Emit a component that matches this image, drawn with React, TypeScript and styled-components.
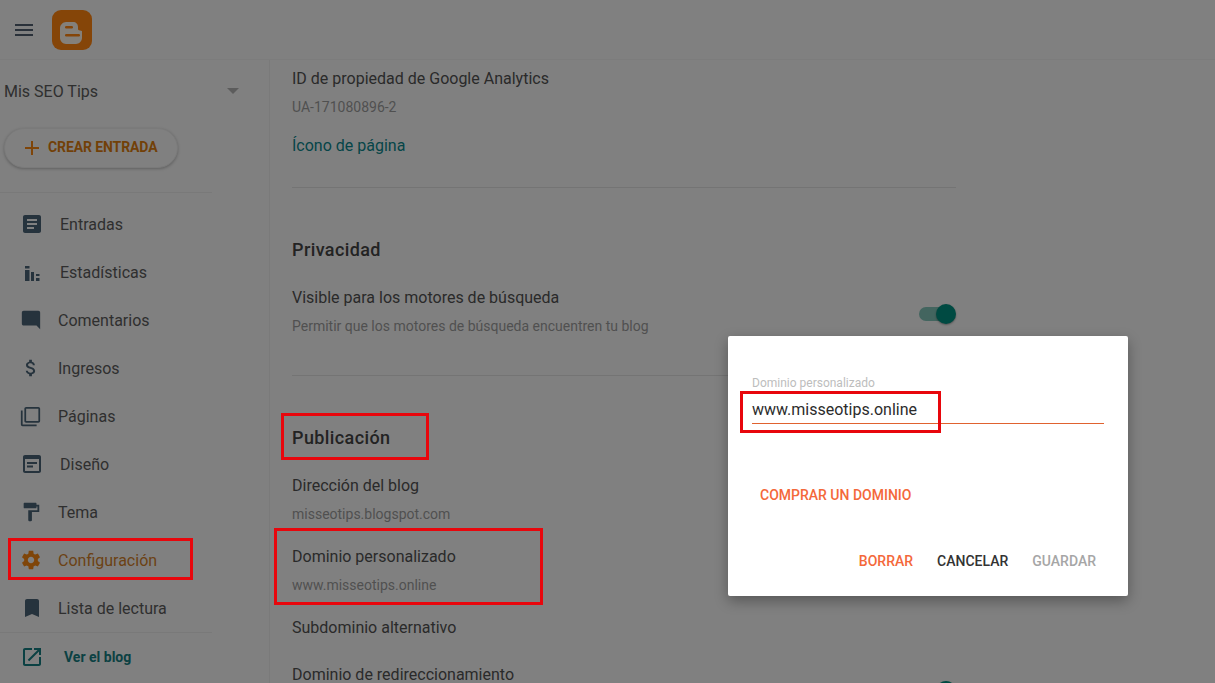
import styled, { createGlobalStyle } from 'styled-components'

const GlobalStyle = createGlobalStyle`
  html, body {
    margin: 0;
    height: 100%;
    overflow: hidden;
    background: #808080;
    font-family: Roboto, "Liberation Sans", sans-serif;
    color: #2b2b2b;
  }
`

const Page = styled.div`
  position: relative;
  width: 1215px;
  height: 683px;
  overflow: hidden;
  display: flex;
  flex-direction: column;
`

const Header = styled.header`
  display: flex;
  align-items: center;
  gap: 16px;
  height: 60px;
  flex-shrink: 0;
  padding-left: 12px;
  box-sizing: border-box;
  border-bottom: 1px solid #7c7c7c;
`

const Body = styled.div`
  display: flex;
  flex: 1;
  min-height: 0;
`

const Sidebar = styled.aside`
  width: 270px;
  flex-shrink: 0;
  box-sizing: border-box;
  border-right: 1px solid #7a7a7a;
`

const BlogPicker = styled.div`
  display: flex;
  align-items: center;
  justify-content: space-between;
  height: 62px;
  padding: 0 30px 0 4px;
  font-size: 16px;
  color: #2f2f2f;
`

const Caret = styled.span`
  width: 0;
  height: 0;
  border-left: 6px solid transparent;
  border-right: 6px solid transparent;
  border-top: 6px solid #5c5c5c;
`

const CreateButton = styled.div`
  display: flex;
  align-items: center;
  gap: 8px;
  width: 174px;
  height: 40px;
  margin: 6px 0 0 4px;
  padding-left: 19px;
  box-sizing: border-box;
  border-radius: 20px;
  background: #808080;
  border: 1px solid #7a7a7a;
  box-shadow: 0 1px 3px rgba(0, 0, 0, 0.25);
  font-size: 14px;
  font-weight: 700;
  letter-spacing: -0.1px;
  color: #724008;

  span {
    transform: translateY(-1px);
  }
`

const SideDivider = styled.div`
  width: 212px;
  height: 1px;
  background: #797979;
`

const TopDivider = styled(SideDivider)`
  margin: 24px 0 7px;
`

const Nav = styled.nav`
  display: flex;
  flex-direction: column;
`

const NavItem = styled.div<{ $active?: boolean; $textLeft: number }>`
  position: relative;
  display: flex;
  align-items: center;
  height: 48px;
  padding-left: 20px;
  font-size: 16px;
  color: ${(p) => (p.$active ? '#6c4214' : '#2f2f2f')};

  svg {
    fill: ${(p) => (p.$active ? '#7f4509' : '#26333d')};
  }

  span {
    margin-left: ${(p) => p.$textLeft - 44}px;
  }
`

const IconBox = styled.div`
  display: flex;
  align-items: center;
  width: 24px;
  height: 24px;
  flex-shrink: 0;
`

const ViewBlog = styled.div`
  display: flex;
  align-items: center;
  height: 48px;
  padding-left: 20px;
  gap: 20px;
  font-size: 14px;
  font-weight: 700;
  color: #0b4143;

  svg {
    fill: #0b4143;
  }
`

const Main = styled.main`
  flex: 1;
  padding: 9px 0 0 22px;
  overflow: hidden;
`

const Content = styled.div`
  width: 664px;
`

const Field = styled.div<{ $gap?: number }>`
  position: relative;
  display: flex;
  flex-direction: column;
  gap: 8px;
  margin-bottom: ${(p) => p.$gap ?? 23}px;
`

const FieldTitle = styled.div`
  font-size: 16px;
  line-height: 20px;
  color: #2a2a2a;
`

const FieldValue = styled.div`
  font-size: 14px;
  line-height: 20px;
  min-height: 20px;
  color: #505050;
`

const FieldLink = styled(FieldTitle)`
  color: #064548;
  margin-bottom: 31px;
`

const SectionDivider = styled.div`
  height: 1px;
  background: #747474;
`

const SectionTitle = styled.h2`
  position: relative;
  display: flex;
  align-items: center;
  height: 24px;
  margin: 49px 0 27px;
  font-size: 18px;
  font-weight: 500;
  letter-spacing: 0.4px;
  color: #232323;
`

const ToggleRow = styled.div`
  display: flex;
  justify-content: space-between;
  align-items: center;
  margin-bottom: 39px;
`

const Toggle = styled.div`
  position: relative;
  width: 34px;
  height: 14px;
  margin-right: 3px;
  border-radius: 7px;
  background: #43655f;
  transform: translateY(2px);

  &::after {
    content: '';
    position: absolute;
    right: -3px;
    top: -3px;
    width: 20px;
    height: 20px;
    border-radius: 50%;
    background: #004a42;
    box-shadow: 0 1px 2px rgba(0, 0, 0, 0.35);
  }
`

const Mark = styled.div<{ $top: number; $left: number; $width: number; $height: number }>`
  position: absolute;
  top: ${(p) => p.$top}px;
  left: ${(p) => p.$left}px;
  width: ${(p) => p.$width}px;
  height: ${(p) => p.$height}px;
  box-sizing: border-box;
  border: 3px solid #e8060c;
  pointer-events: none;
`

const Dialog = styled.div`
  position: absolute;
  left: 728px;
  top: 336px;
  width: 400px;
  height: 260px;
  box-sizing: border-box;
  padding: 41px 24px 0;
  background: #fff;
  border-radius: 2px;
  box-shadow: 0 5px 14px rgba(0, 0, 0, 0.32);
`

const InputLabel = styled.div`
  font-size: 12px;
  line-height: 12px;
  color: #bdbdbd;
`

const InputValue = styled.div`
  position: relative;
  height: 35px;
  box-sizing: border-box;
  padding-top: 11px;
  border-bottom: 1px solid #e0622f;
  font-size: 16px;
  line-height: 20px;
  color: #2c2c2c;
`

const BuyLink = styled.div`
  margin: 61px 0 0 8px;
  font-size: 14px;
  line-height: 20px;
  font-weight: 500;
  color: #f4683a;
`

const Actions = styled.div`
  display: flex;
  justify-content: flex-end;
  gap: 24px;
  margin: 46px 8px 0 0;
`

const Action = styled.div<{ $color: string }>`
  font-size: 14px;
  line-height: 20px;
  font-weight: 500;
  color: ${(p) => p.$color};
`

const MenuIcon = styled.svg`
  fill: #2a313a;
`

const Icon = ({ d, size = 24 }: { d: string; size?: number }) => (
  <svg width={size} height={size} viewBox="0 0 24 24">
    <path d={d} />
  </svg>
)

const ICONS = {
  posts: 'M19 3H5c-1.1 0-2 .9-2 2v14c0 1.1.9 2 2 2h14c1.1 0 2-.9 2-2V5c0-1.1-.9-2-2-2zm-5 14H7v-2h7v2zm3-4H7v-2h10v2zm0-4H7V7h10v2z',
  stats: 'M5 6h4.500v2.500H5zM5 10h4.500v11H5zM11 12h3v9h-3zM16 14h3.500v2H16zM16 18h3.500v3H16z',
  comments: 'M21.99 4c0-1.1-.89-2-1.99-2H4c-1.1 0-2 .9-2 2v12c0 1.1.9 2 2 2h14l4 4-.01-18z',
  money: 'M11.8 10.9c-2.27-.59-3-1.2-3-2.15 0-1.09 1.01-1.85 2.7-1.85 1.78 0 2.44.85 2.5 2.1h2.21c-.07-1.72-1.12-3.3-3.21-3.81V3h-3v2.16c-1.94.42-3.5 1.68-3.5 3.61 0 2.31 1.91 3.46 4.7 4.13 2.5.6 3 1.48 3 2.41 0 .69-.49 1.79-2.7 1.79-2.06 0-2.87-.92-2.98-2.1h-2.2c.12 2.19 1.76 3.42 3.68 3.83V21h3v-2.15c1.95-.37 3.5-1.5 3.5-3.55 0-2.84-2.43-3.81-4.7-4.4z',
  pages: 'M3 5H1v16c0 1.1.9 2 2 2h16v-2H3V5zm18-4H7c-1.1 0-2 .9-2 2v14c0 1.1.9 2 2 2h14c1.1 0 2-.9 2-2V3c0-1.1-.9-2-2-2zm0 16H7V3h14v14z',
  layout: 'M19 3H5c-1.1 0-2 .9-2 2v14c0 1.1.9 2 2 2h14c1.1 0 2-.9 2-2V5c0-1.1-.9-2-2-2zm0 16H5V7h14v12zM7 10h10v2H7zm0 3.500h6v2H7z',
  theme: 'M18 4V3c0-.55-.45-1-1-1H5c-.55 0-1 .45-1 1v4c0 .55.45 1 1 1h12c.55 0 1-.45 1-1V6h1v4H9v11c0 .55.45 1 1 1h2c.55 0 1-.45 1-1v-9h8V4h-3z',
  settings: 'M19.43 12.98c.04-.32.07-.64.07-.98s-.03-.66-.07-.98l2.11-1.65c.19-.15.24-.42.12-.64l-2-3.46c-.12-.22-.39-.3-.61-.22l-2.49 1c-.52-.4-1.08-.73-1.69-.98l-.38-2.65C14.46 2.18 14.25 2 14 2h-4c-.25 0-.46.18-.49.42l-.38 2.65c-.61.25-1.17.59-1.69.98l-2.49-1c-.23-.09-.49 0-.61.22l-2 3.46c-.13.22-.07.49.12.64l2.11 1.65c-.04.32-.07.65-.07.98s.03.66.07.98l-2.11 1.65c-.19.15-.24.42-.12.64l2 3.46c.12.22.39.3.61.22l2.49-1c.52.4 1.08.73 1.69.98l.38 2.65c.03.24.24.42.49.42h4c.25 0 .46-.18.49-.42l.38-2.65c.61-.25 1.17-.59 1.69-.98l2.49 1c.23.09.49 0 .61-.22l2-3.46c.12-.22.07-.49-.12-.64l-2.11-1.65zM12 15.500c-1.93 0-3.500-1.570-3.500-3.500s1.570-3.500 3.500-3.500 3.500 1.570 3.500 3.500-1.570 3.500-3.500 3.500z',
  bookmark: 'M17 3H7c-1.1 0-1.99.9-1.99 2L5 21l7-3 7 3V5c0-1.1-.9-2-2-2z',
  open: 'M19 19H5V5h7V3H5c-1.11 0-2 .9-2 2v14c0 1.1.89 2 2 2h14c1.1 0 2-.9 2-2v-7h-2v7zM14 3v2h3.590l-9.830 9.830 1.410 1.410L19 6.410V10h2V3h-7z',
}

const NAV_ITEMS = [
  { label: 'Entradas', icon: ICONS.posts, textLeft: 60, size: 24 },
  { label: 'Estadísticas', icon: ICONS.stats, textLeft: 60, size: 24 },
  { label: 'Comentarios', icon: ICONS.comments, textLeft: 58, size: 22 },
  { label: 'Ingresos', icon: ICONS.money, textLeft: 58, size: 22 },
  { label: 'Páginas', icon: ICONS.pages, textLeft: 58, size: 21 },
  { label: 'Diseño', icon: ICONS.layout, textLeft: 60, size: 24 },
  { label: 'Tema', icon: ICONS.theme, textLeft: 58, size: 22 },
  { label: 'Configuración', icon: ICONS.settings, textLeft: 58, size: 22, active: true },
  { label: 'Lista de lectura', icon: ICONS.bookmark, textLeft: 58, size: 24 },
]

const Logo = () => (
  <svg width="40" height="40" viewBox="0 0 40 40">
    <rect width="40" height="40" rx="9" fill="#854508" />
    <path
      d="M14 12h7c3 0 5 2 5 5v2c0 1 1 1.500 4 2v7c0 3-3 6-6 6H14c-3 0-6-3-6-6V18c0-3 3-6 6-6z"
      fill="#84807a"
    />
    <rect x="13" y="16" width="8" height="2.500" rx="1.250" fill="#854508" />
    <rect x="13" y="24" width="15" height="2.500" rx="1.250" fill="#854508" />
  </svg>
)

export default function App() {
  return (
    <Page>
      <GlobalStyle />
      <Header>
        <MenuIcon width="24" height="24" viewBox="0 0 24 24">
          <path d="M3 18h18v-2H3v2zm0-5h18v-2H3v2zm0-7v2h18V6H3z" />
        </MenuIcon>
        <Logo />
      </Header>
      <Body>
        <Sidebar>
          <BlogPicker>
            Mis SEO Tips
            <Caret />
          </BlogPicker>
          <CreateButton>
            <svg width="16" height="16" viewBox="0 0 16 16">
              <path d="M7 1h2v6h6v2H9v6H7V9H1V7h6z" fill="#7f4509" />
            </svg>
            <span>CREAR ENTRADA</span>
          </CreateButton>
          <TopDivider />
          <Nav>
            {NAV_ITEMS.map((item) => (
              <NavItem key={item.label} $active={item.active} $textLeft={item.textLeft}>
                <IconBox>
                  <Icon d={item.icon} size={item.size} />
                </IconBox>
                <span>{item.label}</span>
                {item.active && <Mark $top={2} $left={8} $width={185} $height={42} />}
              </NavItem>
            ))}
          </Nav>
          <SideDivider />
          <ViewBlog>
            <Icon d={ICONS.open} />
            Ver el blog
          </ViewBlog>
        </Sidebar>
        <Main>
          <Content>
            <Field $gap={19}>
              <FieldTitle>ID de propiedad de Google Analytics</FieldTitle>
              <FieldValue>UA-171080896-2</FieldValue>
            </Field>
            <FieldLink>Ícono de página</FieldLink>
            <SectionDivider />
            <SectionTitle>Privacidad</SectionTitle>
            <ToggleRow>
              <Field $gap={0}>
                <FieldTitle>Visible para los motores de búsqueda</FieldTitle>
                <FieldValue>Permitir que los motores de búsqueda encuentren tu blog</FieldValue>
              </Field>
              <Toggle />
            </ToggleRow>
            <SectionDivider />
            <SectionTitle>
              Publicación
              <Mark $top={-12} $left={-11} $width={148} $height={47} />
            </SectionTitle>
            <Field>
              <FieldTitle>Dirección del blog</FieldTitle>
              <FieldValue>misseotips.blogspot.com</FieldValue>
            </Field>
            <Field>
              <FieldTitle>Dominio personalizado</FieldTitle>
              <FieldValue>www.misseotips.online</FieldValue>
              <Mark $top={-19} $left={-18} $width={269} $height={77} />
            </Field>
            <Field $gap={27}>
              <FieldTitle>Subdominio alternativo</FieldTitle>
            </Field>
            <ToggleRow>
              <Field $gap={0}>
                <FieldTitle>Dominio de redireccionamiento</FieldTitle>
                <FieldValue />
              </Field>
              <Toggle />
            </ToggleRow>
          </Content>
        </Main>
      </Body>
      <Dialog>
        <InputLabel>Dominio personalizado</InputLabel>
        <InputValue>
          www.misseotips.online
          <Mark $top={2} $left={-12} $width={201} $height={42} />
        </InputValue>
        <BuyLink>COMPRAR UN DOMINIO</BuyLink>
        <Actions>
          <Action $color="#f4683a">BORRAR</Action>
          <Action $color="#333">CANCELAR</Action>
          <Action $color="#a6a6a6">GUARDAR</Action>
        </Actions>
      </Dialog>
    </Page>
  )
}
